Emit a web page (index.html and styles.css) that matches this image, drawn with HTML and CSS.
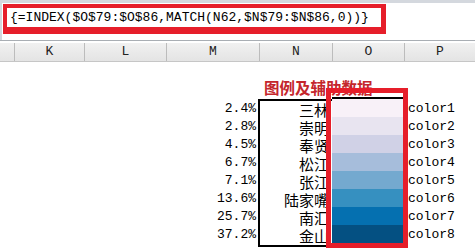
FILE: index.html
```html
<!DOCTYPE html>
<html>
<head>
    <meta charset="UTF-8">
    <title>图例及辅助数据</title>
    <link rel="stylesheet" href="styles.css">
</head>
<body>
<div class="formula-bar">
    <div class="formula">{=INDEX($O$79:$O$86,MATCH(N62,$N$79:$N$86,0))}</div>
</div>
<ul class="col-heads">
    <li class="corner"></li>
    <li class="c-k">K</li>
    <li class="c-l">L</li>
    <li class="c-m">M</li>
    <li class="c-n">N</li>
    <li class="c-o">O</li>
    <li class="c-p">P</li>
</ul>
<div class="sheet">
    <div class="title">图例及辅助数据</div>
    <div class="legend">
        <ul class="pct">
            <li>2.4%</li>
            <li>2.8%</li>
            <li>4.5%</li>
            <li>6.7%</li>
            <li>7.1%</li>
            <li>13.6%</li>
            <li>25.7%</li>
            <li>37.2%</li>
        </ul>
        <ul class="names">
            <li>三林</li>
            <li>崇明</li>
            <li>奉贤</li>
            <li>松江</li>
            <li>张江</li>
            <li>陆家嘴</li>
            <li>南汇</li>
            <li>金山</li>
        </ul>
        <ul class="swatches">
            <li class="s1"></li>
            <li class="s2"></li>
            <li class="s3"></li>
            <li class="s4"></li>
            <li class="s5"></li>
            <li class="s6"></li>
            <li class="s7"></li>
            <li class="s8"></li>
        </ul>
        <ul class="labels">
            <li>color1</li>
            <li>color2</li>
            <li>color3</li>
            <li>color4</li>
            <li>color5</li>
            <li>color6</li>
            <li>color7</li>
            <li>color8</li>
        </ul>
    </div>
    <div class="mark"></div>
</div>
</body>
</html>
```
FILE: styles.css
```css
* {
    margin: 0;
    padding: 0;
    box-sizing: border-box;
}

ul, li {
    list-style: none;
}

html, body {
    width: 100%;
    height: 100%;
    overflow: hidden;
    background: #fff;
}

body {
    font-family: "Liberation Mono", "Noto Sans CJK SC", monospace;
    font-size: 13px;
    color: #000;
}

.formula-bar {
    height: 40px;
    border-top: 3px solid #d4d8de;
    border-left: 2px solid #d4d8de;
    padding: 1px 0 0 1px;
    background: #fff;
}

.formula {
    width: 383px;
    height: 30px;
    border-style: solid;
    border-color: #e61e2a;
    border-width: 4px 5px 7px 4px;
    padding: 2px 0 0 3px;
    line-height: 16px;
    white-space: nowrap;
}

.col-heads {
    display: flex;
    height: 22px;
    border-top: 1px solid #a9aeb4;
    border-bottom: 1px solid #c6c6c6;
    background: linear-gradient(#f2f2f2, #e4e4e4);
    box-shadow: inset 0 2px 0 #fff;
    padding-top: 2px;
}

.col-heads li {
    border-right: 1px solid #bcbcbc;
    text-align: center;
    line-height: 18px;
    color: #222;
}

.col-heads .corner { width: 15px; }
.col-heads .c-k { width: 70px; }
.col-heads .c-l { width: 82px; }
.col-heads .c-m { width: 93px; }
.col-heads .c-n { width: 73px; }
.col-heads .c-o { width: 72px; }
.col-heads .c-p { flex: 1; border-right: none; }

.sheet {
    position: relative;
}

.title {
    height: 37px;
    padding: 16px 0 0 264px;
    font-family: "Noto Sans CJK SC", sans-serif;
    font-size: 15.5px;
    font-weight: bold;
    line-height: 18px;
    color: #c4262c;
}

.legend {
    display: flex;
    margin-left: 166px;
}

.legend li {
    height: 18px;
    line-height: 18px;
    white-space: nowrap;
}

.pct {
    width: 92px;
    padding-top: 1px;
    text-align: right;
    padding-right: 2px;
}

.names {
    width: 74px;
    border: 2px solid #000;
    border-right: none;
    text-align: right;
    padding-right: 3px;
    font-family: "Noto Sans CJK SC", sans-serif;
    font-size: 15px;
}

.names li {
    line-height: 17px;
}

.swatches {
    width: 72px;
    margin-top: -2px;
    border-top: 2px solid #000;
    border-right: 1px solid #000;
    height: 148px;
}

.swatches .s1 { background: #f8f1f8; }
.swatches .s2 { background: #e8e4f0; }
.swatches .s3 { background: #d0d1e6; }
.swatches .s4 { background: #a6bddb; }
.swatches .s5 { background: #74a9cf; }
.swatches .s6 { background: #3690c0; }
.swatches .s7 { background: #0570b0; }
.swatches .s8 { background: #045082; }

.labels {
    padding: 1px 0 0 4px;
}

.mark {
    position: absolute;
    left: 326px;
    top: 26px;
    width: 82px;
    height: 160px;
    border: 5px solid #e61e2a;
}
```
